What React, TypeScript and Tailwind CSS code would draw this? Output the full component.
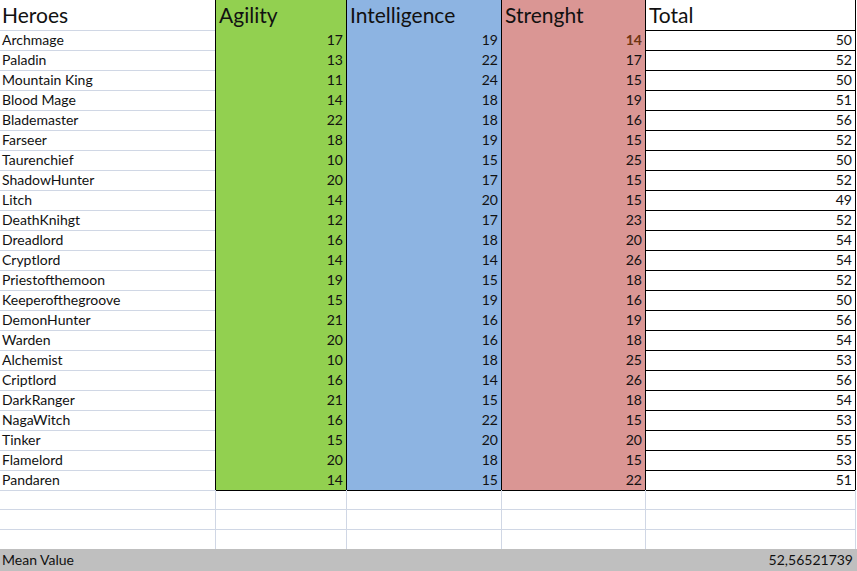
const heroes: [string, number, number, number, number][] = [
  ['Archmage', 17, 19, 14, 50],
  ['Paladin', 13, 22, 17, 52],
  ['Mountain King', 11, 24, 15, 50],
  ['Blood Mage', 14, 18, 19, 51],
  ['Blademaster', 22, 18, 16, 56],
  ['Farseer', 18, 19, 15, 52],
  ['Taurenchief', 10, 15, 25, 50],
  ['ShadowHunter', 20, 17, 15, 52],
  ['Litch', 14, 20, 15, 49],
  ['DeathKnihgt', 12, 17, 23, 52],
  ['Dreadlord', 16, 18, 20, 54],
  ['Cryptlord', 14, 14, 26, 54],
  ['Priestofthemoon', 19, 15, 18, 52],
  ['Keeperofthegroove', 15, 19, 16, 50],
  ['DemonHunter', 21, 16, 19, 56],
  ['Warden', 20, 16, 18, 54],
  ['Alchemist', 10, 18, 25, 53],
  ['Criptlord', 16, 14, 26, 56],
  ['DarkRanger', 21, 15, 18, 54],
  ['NagaWitch', 16, 22, 15, 53],
  ['Tinker', 15, 20, 20, 55],
  ['Flamelord', 20, 18, 15, 53],
  ['Pandaren', 14, 15, 22, 51],
]

const cols = 'grid grid-cols-[216px_131px_155px_144px_210px]'

export default function App() {
  return (
    <div className="w-[857px] h-[571px] bg-white overflow-hidden font-['Lato',sans-serif] text-[#111]">
      {/* Header */}
      <div className={`${cols} h-[30px] text-[21px] leading-[30px]`}>
        <div className="border-b border-r border-b-[#d0d7e5] border-r-black pl-[2px]">Heroes</div>
        <div className="bg-[#92d050] border-b border-r border-black pl-[3px]">Agility</div>
        <div className="bg-[#8db4e2] border-b border-r border-black pl-[3px]">Intelligence</div>
        <div className="bg-[#da9694] border-b border-r border-black pl-[3px]">Strenght</div>
        <div className="border-b border-r border-black pl-[3px]">Total</div>
      </div>

      {/* Rows */}
      {heroes.map(([name, agi, int, str, total], i) => (
        <div key={name} className={`${cols} h-[20px] text-[14px] leading-[20px]`}>
          <div className="border-b border-r border-b-[#d0d7e5] border-r-black pl-[2px]">{name}</div>
          <div className="bg-[#92d050] border-b border-r border-black text-right pr-[3px]">{agi}</div>
          <div className="bg-[#8db4e2] border-b border-r border-black text-right pr-[3px]">{int}</div>
          <div className={`bg-[#da9694] border-b border-r border-black text-right pr-[3px] ${i === 0 ? 'font-bold text-[#6e3410]' : ''}`}>{str}</div>
          <div className="border-b border-r border-black text-right pr-[3px]">{total}</div>
        </div>
      ))}

      {/* Empty rows */}
      {[0, 1, 2].map((r) => (
        <div key={r} className={`${cols} ${r < 2 ? 'h-[20px]' : 'h-[19px]'}`}>
          {[0, 1, 2, 3, 4].map((c) => (
            <div key={c} className={`border-r border-r-[#d0d7e5] ${r < 2 ? 'border-b border-b-[#d0d7e5]' : ''}`} />
          ))}
        </div>
      ))}

      {/* Mean */}
      <div className="h-[22px] bg-[#bfbfbf] flex justify-between items-center pl-[2px] pr-[4px] text-[14px] leading-[22px]">
        <span>Mean Value</span>
        <span>52,56521739</span>
      </div>
    </div>
  )
}
